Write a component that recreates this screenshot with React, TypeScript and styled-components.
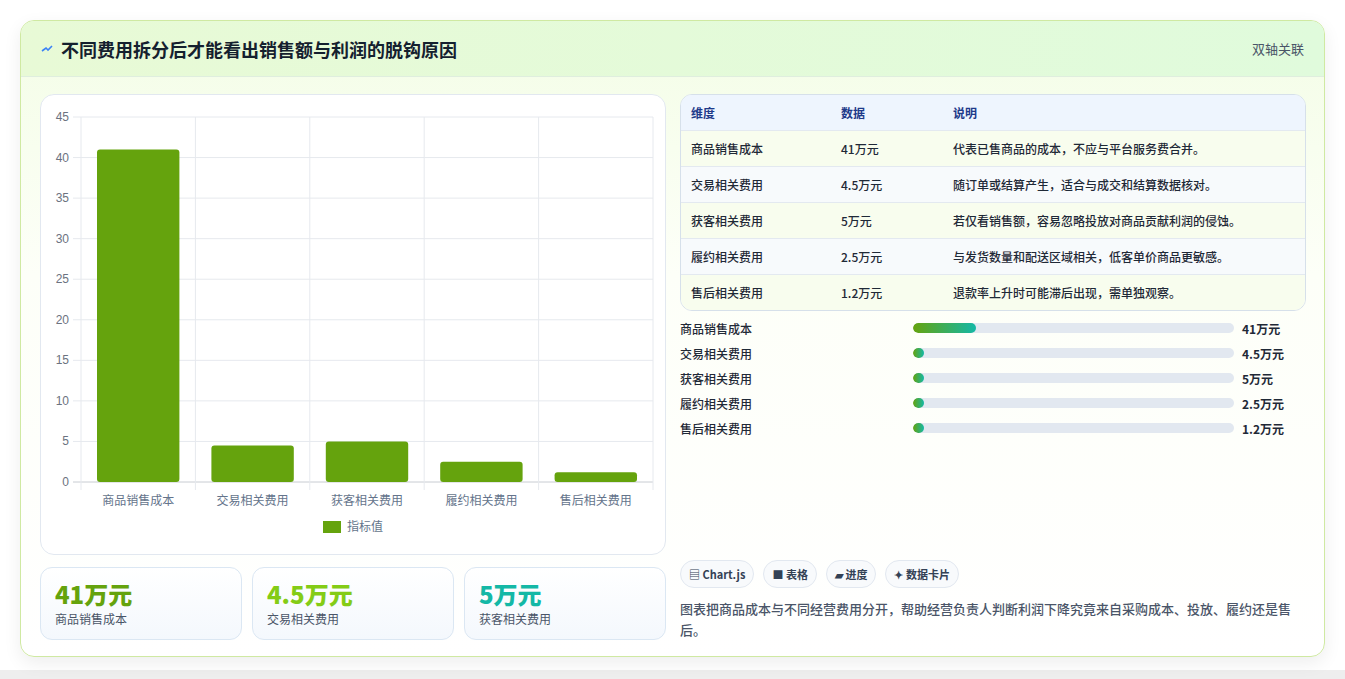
import React from 'react';
import styled, { createGlobalStyle } from 'styled-components';

const Global = createGlobalStyle`
  body { margin: 0; background: #f3f4f3; font-family: 'Noto Sans CJK SC', 'Noto Sans', sans-serif; }
`;

const Page = styled.div`
  height: 679px;
  padding: 20px 20px 0;
  box-sizing: border-box;
  background: linear-gradient(#ffffff 0, #ffffff 670px, #eeeeee 670px);
`;

const Card = styled.div`
  height: 637px;
  box-sizing: border-box;
  border: 1px solid #cfe9a2;
  border-radius: 14px;
  background: linear-gradient(180deg, #f3fde6 0%, #fdfff8 40%, #ffffff 100%);
  box-shadow: 0 6px 18px rgba(0, 0, 0, 0.07);
  overflow: hidden;
  display: flex;
  flex-direction: column;
`;

const Header = styled.div`
  height: 55px;
  flex-shrink: 0;
  display: flex;
  align-items: center;
  justify-content: space-between;
  padding: 0 20px;
  background: linear-gradient(90deg, #e8fad6, #e0fbdc);
  border-bottom: 1px solid #dfeede;
`;

const Title = styled.h1`
  margin: 0;
  font-size: 18px;
  font-weight: 700;
  color: #14202e;
  display: flex;
  align-items: center;
  gap: 8px;
`;

const Tag = styled.span`
  font-size: 13px;
  color: #4a5568;
`;

const Body = styled.div`
  flex: 1;
  display: grid;
  grid-template-columns: 626px 626px;
  gap: 14px;
  padding: 17px 19px 18px;
`;

const Col = styled.div`
  display: flex;
  flex-direction: column;
  gap: 12px;
  min-height: 0;
`;

const ChartBox = styled.div`
  height: 461px;
  box-sizing: border-box;
  border: 1px solid #e2e8f0;
  border-radius: 14px;
  background: #ffffff;
`;

const Stats = styled.div`
  display: grid;
  grid-template-columns: repeat(3, 1fr);
  gap: 10px;
`;

const Stat = styled.div`
  height: 73px;
  box-sizing: border-box;
  border: 1px solid #dbe7f3;
  border-radius: 12px;
  background: linear-gradient(180deg, #ffffff, #f4f8fd);
  padding: 10px 14px;
`;

const StatValue = styled.div<{ $c: string }>`
  font-size: 24px;
  font-weight: 800;
  line-height: 32px;
  color: ${p => p.$c};
`;

const StatLabel = styled.div`
  font-size: 12px;
  color: #4a5568;
`;

const Table = styled.div`
  border: 1px solid #d6e0ea;
  border-radius: 12px;
  overflow: hidden;
  background: #fff;
`;

const Row = styled.div<{ $bg: string; $head?: boolean }>`
  display: grid;
  grid-template-columns: 150px 112px 1fr;
  height: 35px;
  align-items: center;
  padding: 0 10px;
  font-size: 12px;
  font-weight: ${p => (p.$head ? 700 : 500)};
  color: ${p => (p.$head ? '#1e3a8a' : '#1f2937')};
  background: ${p => p.$bg};
  border-bottom: 1px solid #e3e9f0;
  &:last-child { border-bottom: none; }
`;

const Bars = styled.div`
  display: flex;
  flex-direction: column;
  gap: 7px;
  margin-top: -4px;
`;

const BarRow = styled.div`
  display: grid;
  grid-template-columns: 233px 321px 1fr;
  align-items: center;
  gap: 0;
  height: 18px;
  font-size: 12px;
  color: #1f2937;
  font-weight: 500;
`;

const Track = styled.div`
  height: 10px;
  border-radius: 5px;
  background: #e2e8f0;
  overflow: hidden;
`;

const Fill = styled.div`
  height: 100%;
  min-width: 11px;
  border-radius: 5px;
  background: linear-gradient(90deg, #65a30d, #14b8a6);
`;

const BarValue = styled.span`
  padding-left: 8px;
  font-weight: 700;
`;

const Chips = styled.div`
  margin-top: auto;
  display: flex;
  gap: 9px;
`;

const Chip = styled.span`
  height: 28px;
  box-sizing: border-box;
  padding: 0 8px;
  display: inline-flex;
  align-items: center;
  gap: 4px;
  border: 1px solid #e2e8f0;
  border-radius: 14px;
  background: #f8fafc;
  font-size: 11px;
  font-weight: 700;
  color: #334155;
`;

const Note = styled.p`
  margin: -2px 0 0;
  font-size: 13px;
  line-height: 21px;
  color: #4a5568;
  font-weight: 500;
`;

const data = [
  { k: '商品销售成本', v: 41, t: '41万元', d: '代表已售商品的成本，不应与平台服务费合并。' },
  { k: '交易相关费用', v: 4.5, t: '4.5万元', d: '随订单或结算产生，适合与成交和结算数据核对。' },
  { k: '获客相关费用', v: 5, t: '5万元', d: '若仅看销售额，容易忽略投放对商品贡献利润的侵蚀。' },
  { k: '履约相关费用', v: 2.5, t: '2.5万元', d: '与发货数量和配送区域相关，低客单价商品更敏感。' },
  { k: '售后相关费用', v: 1.2, t: '1.2万元', d: '退款率上升时可能滞后出现，需单独观察。' },
];

const BarChart = () => {
  const L = 40, R = 612, T = 22, B = 387;
  const cw = (R - L) / 5;
  const y = (v: number) => B - (v / 45) * (B - T);
  const font = "'Noto Sans CJK SC', sans-serif";
  return (
    <svg width="624" height="459">
      {[0, 5, 10, 15, 20, 25, 30, 35, 40, 45].map(v => (
        <g key={v}>
          <line x1={L - 8} x2={R} y1={y(v)} y2={y(v)} stroke={v === 0 ? '#c8ccd2' : '#e6e9ee'} />
          <text x={L - 12} y={y(v) + 4} textAnchor="end" fontSize="12" fill="#6b7280" fontFamily="'Liberation Sans', sans-serif">{v}</text>
        </g>
      ))}
      {[0, 1, 2, 3, 4, 5].map(i => (
        <line key={i} x1={L + i * cw} x2={L + i * cw} y1={T} y2={B + 8} stroke="#e6e9ee" />
      ))}
      {data.map((d, i) => (
        <g key={d.k}>
          <rect x={L + i * cw + 16} y={y(d.v)} width={cw - 32} height={B - y(d.v)} rx="3" fill="#65a30d" />
          <text x={L + i * cw + cw / 2} y={B + 23} textAnchor="middle" fontSize="12" fill="#64748b" fontFamily={font}>{d.k}</text>
        </g>
      ))}
      <rect x="282" y="426" width="18" height="12" fill="#65a30d" />
      <text x="306" y="436" fontSize="12" fill="#64748b" fontFamily={font}>指标值</text>
    </svg>
  );
};

export default function App() {
  return (
    <Page>
      <Global />
      <Card>
        <Header>
          <Title>
            <svg width="12" height="12" viewBox="0 0 12 12"><path d="M1 8 L5 5 L7 7 L11 3" stroke="#3b82f6" strokeWidth="1.6" fill="none" /></svg>
            不同费用拆分后才能看出销售额与利润的脱钩原因
          </Title>
          <Tag>双轴关联</Tag>
        </Header>
        <Body>
          <Col>
            <ChartBox><BarChart /></ChartBox>
            <Stats>
              <Stat><StatValue $c="#65a30d">41万元</StatValue><StatLabel>商品销售成本</StatLabel></Stat>
              <Stat><StatValue $c="#84cc16">4.5万元</StatValue><StatLabel>交易相关费用</StatLabel></Stat>
              <Stat><StatValue $c="#14b8a6">5万元</StatValue><StatLabel>获客相关费用</StatLabel></Stat>
            </Stats>
          </Col>
          <Col>
            <Table>
              <Row $head $bg="#eef5fe"><span>维度</span><span>数据</span><span>说明</span></Row>
              {data.map((d, i) => (
                <Row key={d.k} $bg={i % 2 === 0 ? '#f8fdee' : '#f7fafc'}>
                  <span>{d.k}</span><span>{d.t}</span><span>{d.d}</span>
                </Row>
              ))}
            </Table>
            <Bars>
              {data.map(d => (
                <BarRow key={d.k}>
                  <span>{d.k}</span>
                  <Track><Fill style={{ width: `${(d.v / 210) * 100}%` }} /></Track>
                  <BarValue>{d.t}</BarValue>
                </BarRow>
              ))}
            </Bars>
            <Chips>
              <Chip>▤ Chart.js</Chip>
              <Chip>■ 表格</Chip>
              <Chip>▰ 进度</Chip>
              <Chip>✦ 数据卡片</Chip>
            </Chips>
            <Note>图表把商品成本与不同经营费用分开，帮助经营负责人判断利润下降究竟来自采购成本、投放、履约还是售后。</Note>
          </Col>
        </Body>
      </Card>
    </Page>
  );
}
